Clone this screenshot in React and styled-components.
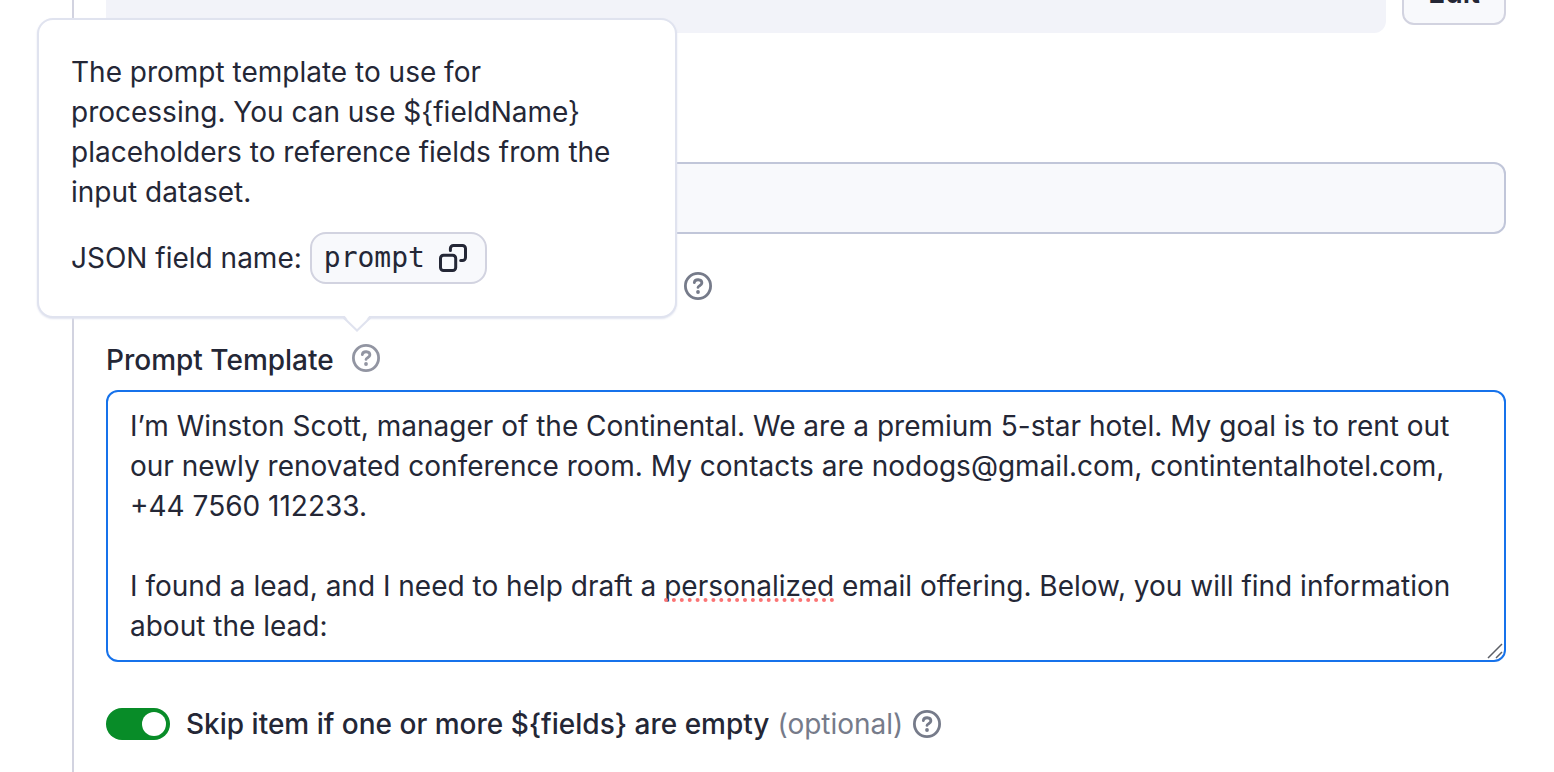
import React, { useState } from "react";
import styled, { createGlobalStyle } from "styled-components";

const color = {
  text: "#242736",
  muted: "#767b8a",
  rail: "#d2d3e0",
  border: "#c1c6d9",
  soft: "#e0e3ef",
  subtle: "#f8f9fc",
  panel: "#f2f3f9",
  focus: "#1672eb",
  success: "#088c28",
};

const GlobalStyle = createGlobalStyle`
  *, *::before, *::after { box-sizing: border-box; }
  body {
    margin: 0;
    background: #fff;
    color: ${color.text};
    font-family: Inter, "Liberation Sans", sans-serif;
    font-size: 28px;
    font-optical-sizing: none;
    line-height: 40px;
  }
`;

const Page = styled.div`
  min-height: 100vh;
  display: flex;
  overflow: hidden;
  padding: 0 48px 0 72px;
`;

const Form = styled.main`
  flex: 1;
  min-width: 0;
  display: flex;
  flex-direction: column;
  border-left: 2px solid ${color.rail};
  padding: 0 0 28px 32px;
`;

const SummaryRow = styled.div`
  display: flex;
  align-items: center;
  gap: 16px;
  margin-top: -47px;
`;

const Summary = styled.div`
  flex: 1;
  height: 80px;
  border-radius: 12px;
  background: ${color.panel};
`;

const EditButton = styled.button`
  height: 64px;
  padding: 0 24px;
  border: 2px solid ${color.rail};
  border-radius: 12px;
  background: ${color.subtle};
  color: inherit;
  font: inherit;
  font-weight: 600;
`;

const TextInput = styled.input`
  width: 100%;
  height: 72px;
  margin-top: 129px;
  padding: 0 22px;
  border: 2px solid ${color.border};
  border-radius: 12px;
  background: ${color.subtle};
  font: inherit;
`;

const OptionRow = styled.div`
  display: flex;
  align-items: center;
  justify-content: flex-end;
  width: 606px;
  height: 40px;
  margin-top: 32px;
`;

const LabelRow = styled.div`
  position: relative;
  display: flex;
  align-items: flex-start;
  gap: 18px;
  align-self: flex-start;
  margin: 34px 0 10px;

  > button {
    margin-top: 4px;
  }
`;

const FieldLabel = styled.label`
  font-weight: 500;
`;

const HelpButton = styled.button`
  display: flex;
  width: 28px;
  height: 28px;
  padding: 0;
  border: 0;
  background: none;
  color: ${({ $active }) => ($active ? "#9295a2" : color.muted)};
`;

const Tooltip = styled.div`
  position: absolute;
  left: -69px;
  bottom: calc(100% + 22px);
  width: 640px;
  padding: 32px 56px 32px 32px;
  border: 2px solid ${color.soft};
  border-radius: 16px;
  background: #fff;
  box-shadow: 0 1px 2px ${color.soft};
`;

const TooltipArrow = styled.svg`
  position: absolute;
  left: 304px;
  top: calc(100% - 2px);
  width: 28px;
  height: 18px;
`;

const TooltipText = styled.p`
  margin: 0 0 20px;
`;

const FieldName = styled.div`
  display: flex;
  align-items: center;
  gap: 8px;
  white-space: nowrap;
`;

const CopyChip = styled.button`
  display: flex;
  align-items: center;
  gap: 14px;
  height: 52px;
  padding: 0 18px 0 12px;
  border: 2px solid ${color.rail};
  border-radius: 16px;
  background: ${color.subtle};
  color: inherit;
  font: 28px/40px "DejaVu Sans Mono", monospace;
`;

const Editor = styled.div`
  position: relative;
  display: flex;
`;

const TextArea = styled.textarea`
  flex: 1;
  min-width: 0;
  height: 272px;
  padding: 14px 22px;
  border: 2px solid ${color.focus};
  border-radius: 12px;
  outline: 0;
  background: #fff;
  color: inherit;
  font: inherit;
  font-optical-sizing: none;
  overflow: hidden;
  resize: none;
`;

const SpellingMark = styled.svg`
  position: absolute;
  left: 558px;
  top: 207px;
  width: 170px;
  height: 6px;
  pointer-events: none;
`;

const ResizeGrip = styled.svg`
  position: absolute;
  right: 3px;
  bottom: 3px;
  width: 16px;
  height: 16px;
  pointer-events: none;
`;

const SwitchRow = styled.div`
  display: flex;
  align-items: center;
  margin-top: 42px;
`;

const Switch = styled.input`
  appearance: none;
  flex: none;
  width: 64px;
  height: 32px;
  margin: 0 16px 0 0;
  padding: 4px;
  border-radius: 16px;
  background: ${color.muted};

  &::before {
    content: "";
    display: block;
    width: 24px;
    height: 24px;
    border-radius: 50%;
    background: #fff;
  }

  &:checked {
    background: ${color.success};
  }

  &:checked::before {
    margin-left: auto;
  }
`;

const Optional = styled.span`
  margin: 0 10px 0 8px;
  color: ${color.muted};
`;

function Help({ label, active }) {
  return (
    <HelpButton type="button" aria-label={label} $active={active}>
      <svg width="28" height="28" viewBox="-14 -14 28 28" fill="none" stroke="currentColor" strokeWidth="2.8" strokeLinecap="round" strokeLinejoin="round">
        <circle r="12.6" />
        <path d="M-3.7 -3.4C-3.2 -7.4 3.9 -7.2 3.9 -2.9C3.9 -.4 0 -.3 0 1.4" />
        <circle cy="6" r="1.9" fill="currentColor" stroke="none" />
      </svg>
    </HelpButton>
  );
}

function CopyIcon() {
  return (
    <svg width="28" height="28" viewBox="0 0 28 28" fill="none" stroke="currentColor" strokeWidth="3" strokeLinecap="round" strokeLinejoin="round" aria-hidden="true">
      <rect x="1.5" y="11.3" width="15.2" height="15.2" rx="3" />
      <path d="M11.4 6.4V4.5a3 3 0 0 1 3-3h9.1a3 3 0 0 1 3 3v9a3 3 0 0 1-3 3h-1.8" />
    </svg>
  );
}

const initialPrompt = `I’m Winston Scott, manager of the Continental. We are a premium 5-star hotel. My goal is to rent out our newly renovated conference room. My contacts are nodogs@gmail.com, contintentalhotel.com, +44 7560 112233.

I found a lead, and I need to help draft a personalized email offering. Below, you will find information about the lead:`;

export default function App() {
  const [prompt, setPrompt] = useState(initialPrompt);
  const [skipEmpty, setSkipEmpty] = useState(true);

  return (
    <>
      <GlobalStyle />
      <Page>
        <Form>
          <SummaryRow>
            <Summary />
            <EditButton type="button">Edit</EditButton>
          </SummaryRow>
          <TextInput aria-label="Field value" />
          <OptionRow>
            <Help label="About this option" />
          </OptionRow>
          <LabelRow>
            <FieldLabel htmlFor="prompt">Prompt Template</FieldLabel>
            <Help label="About Prompt Template" active />
            <Tooltip role="tooltip">
              <TooltipText>
                {"The prompt template to use for processing. You can use ${fieldName} placeholders to reference fields from the input dataset."}
              </TooltipText>
              <FieldName>
                JSON field name:
                <CopyChip type="button">
                  prompt
                  <CopyIcon />
                </CopyChip>
              </FieldName>
              <TooltipArrow viewBox="0 -2 28 18" aria-hidden="true">
                <path d="M0 -2H28L14 14Z" fill="#fff" />
                <path d="M0 1L14 14.5L28 1" fill="none" stroke={color.soft} strokeWidth="2" />
              </TooltipArrow>
            </Tooltip>
          </LabelRow>
          <Editor>
            <TextArea id="prompt" spellCheck={false} value={prompt} onChange={(e) => setPrompt(e.target.value)} />
            <SpellingMark viewBox="0 0 170 6" aria-hidden="true">
              <path d="M2 3H169" fill="none" stroke="#fb7474" strokeWidth="4" strokeLinecap="round" strokeDasharray="0 7.9" />
            </SpellingMark>
            <ResizeGrip viewBox="0 0 16 16" fill="none" stroke="#5c5f66" strokeWidth="1.5" aria-hidden="true">
              <path d="M1 15L15 1M9 15L15 9" />
            </ResizeGrip>
          </Editor>
          <SwitchRow>
            <Switch type="checkbox" role="switch" id="skip" checked={skipEmpty} onChange={(e) => setSkipEmpty(e.target.checked)} />
            <FieldLabel htmlFor="skip">{"Skip item if one or more ${fields} are empty"}</FieldLabel>
            <Optional>(optional)</Optional>
            <Help label="About skipping items" />
          </SwitchRow>
        </Form>
      </Page>
    </>
  );
}
